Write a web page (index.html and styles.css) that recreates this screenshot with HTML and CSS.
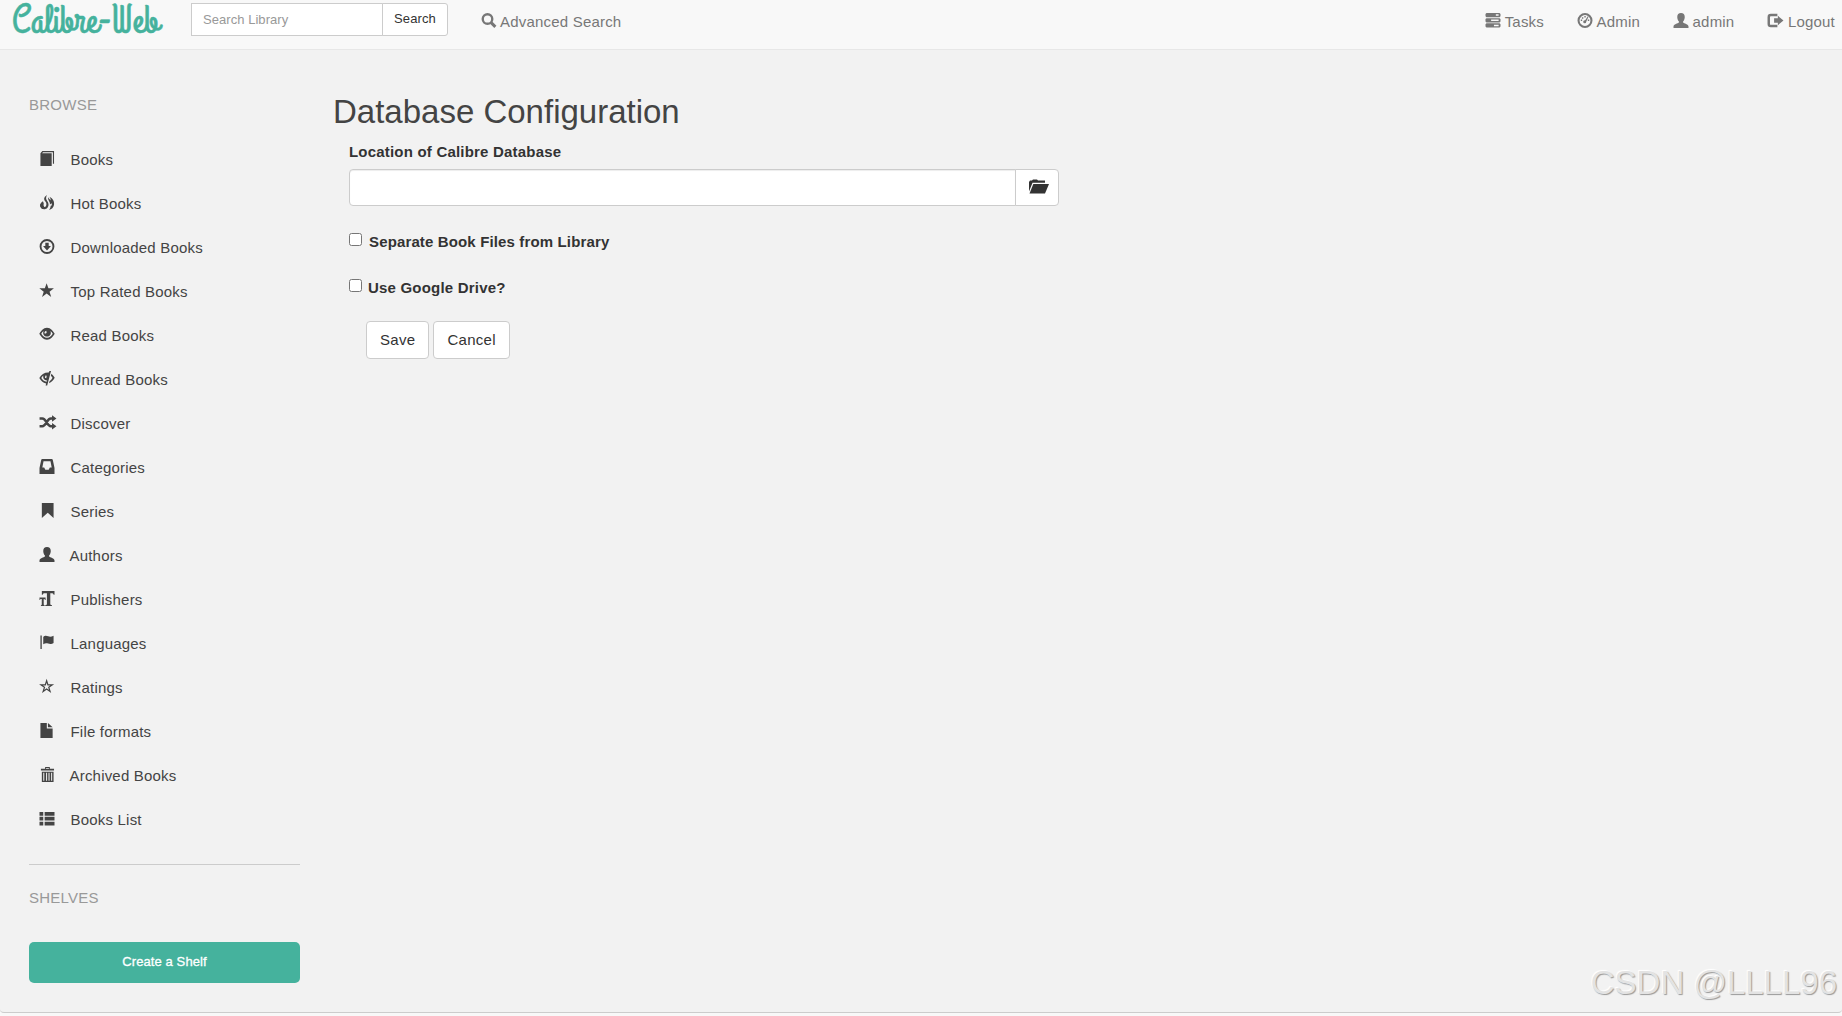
FILE: index.html
```
<!DOCTYPE html>
<html lang="en">
<head>
  <meta charset="UTF-8" />
  <meta name="viewport" content="width=device-width, initial-scale=1.0"/>
  <title>Calibre-Web | Database Configuration</title>
  <link rel="stylesheet" href="styles.css">
</head>
<body>
  <nav class="navbar">
    <a class="brand">
      <svg width="170" height="49" viewBox="0 0 170 49"><text x="0" y="32" textLength="147" lengthAdjust="spacingAndGlyphs">Calibre-Web</text></svg>
    </a>
    <form class="search">
      <input type="text" placeholder="Search Library">
      <button type="button">Search</button>
    </form>
    <a class="nav-link advanced">
      <svg class="icon" viewBox="0 0 16 16"><circle cx="6.4" cy="6.4" r="5.1" fill="none" stroke="currentColor" stroke-width="2.5"/><path d="M10 10l4.800 4.800" stroke="currentColor" stroke-width="3.200"/></svg>
      <span>Advanced Search</span>
    </a>
    <div class="nav-right">
      <a class="nav-link">
        <svg class="icon" viewBox="0 0 16 16"><path fill-rule="evenodd" d="M1 0h14l1 1v2.500l-1 1H1l-1-1V1zM11 1.300v1.700h3V1.300zM1 5.500h14l1 1v2.500l-1 1H1l-1-1v-2.500zM6 7v1.500h8V7zM1 11h14l1 1v2.500l-1 1H1l-1-1v-2.500zM9 12.500v1.500h5v-1.500z"/></svg>
        <span>Tasks</span>
      </a>
      <a class="nav-link">
        <svg class="icon" viewBox="0 0 16 16"><circle cx="8" cy="8" r="6.900" fill="none" stroke="currentColor" stroke-width="2.200"/><path d="M7 9.500l4-6 .8.5-3 6.200zM3.500 7h1.500v1.500H3.500zM4.700 4.500h1.500V6H4.700zM7.300 3.200h1.500v1.500H7.300zM11 7h1.500v1.500H11z"/><circle cx="7.700" cy="9.300" r="1.600"/></svg>
        <span>Admin</span>
      </a>
      <a class="nav-link">
        <svg class="icon" viewBox="0 0 16 16"><path d="M8 0c2.600 0 4 1.700 4 4.200 0 2-.7 3.700-1.800 4.800v1.200c1 1 5.800 1.600 5.800 4.300V16H0v-1.500c0-2.700 4.800-3.300 5.800-4.300V9C4.700 7.900 4 6.200 4 4.200 4 1.700 5.400 0 8 0z"/></svg>
        <span>admin</span>
      </a>
      <a class="nav-link">
        <svg class="icon wide" viewBox="0 0 17 16"><path d="M10.500 2.200H3.500Q1.300 2.200 1.300 4.400v7.200q0 2.200 2.200 2.200h7" fill="none" stroke="currentColor" stroke-width="2.600"/><path d="M11 3l6 5-6 5v-2.700H7V5.700h4z"/></svg>
        <span>Logout</span>
      </a>
    </div>
  </nav>

  <div class="page">
    <aside class="sidebar">
      <p class="nav-head">BROWSE</p>
      <ul class="menu">
        <li><svg class="icon" viewBox="0 0 16 16"><path d="M1 2.500L3 0h12.500v13.500h-1.200V1.300H3.700l-.9 1.200H13V16H1z"/></svg><span>Books</span></li>
        <li><svg class="icon" viewBox="0 0 16 16"><path d="M8 0C4 2.500 4.500 5 6.500 7.300c1 1.500 1.200 3 .3 4.700-.8 1.400-2.800 1-2.700-.6C4.200 10 5 9 3.800 7.500.8 8.500 0 11 1.500 13.300c1.500 2.300 5.300 2.300 7 .2 1.900-2.300 1.300-5-.3-7.200C6.800 4.300 6.500 2.500 8 0z"/><path d="M3.800 6.500C.5 9-.2 12 2 14c1 1 3 1.400 4.500.8L4 11z"/><path d="M10.500 1.800c4 1.700 5.500 5.200 5 8.700-.4 2.800-2.500 5-5.500 5.500 1.500-1.500 1.900-3 1.900-4.500 1.200 0 1.600-1.500 1-2.800l-1.800 1.500c.5-3-2.600-4.500-1.800-7.700C10.300 4.500 11.500 5 12 5.800c0-1.600-.5-2.800-1.500-4z"/></svg><span>Hot Books</span></li>
        <li><svg class="icon" viewBox="0 0 16 16"><circle cx="8" cy="8" r="6.900" fill="none" stroke="currentColor" stroke-width="2"/><path d="M6.200 4h3.600v3.500h2.400L8 12.300 3.800 7.500h2.400z"/></svg><span>Downloaded Books</span></li>
        <li><svg class="icon" viewBox="0 0 16 16"><path d="M7.600.3l1.900 5.400h5.900l-4.700 3.500 1.800 5.600-4.900-3.500-4.900 3.500 1.800-5.600L-.2 5.700h5.900z"/></svg><span>Top Rated Books</span></li>
        <li><svg class="icon" viewBox="0 0 16 16"><path fill-rule="evenodd" d="M8 .8c4 0 6.500 3.600 8.200 6.400-1.700 3-4.200 6.300-8.200 6.300S1.500 10.200-.2 7.200C1.500 4.400 4 .8 8 .8zM4.300 4.300C3.200 5.100 2.500 6 1.900 7.200c1.300 2.400 3.400 4.300 6.100 4.300s4.800-1.900 6.100-4.300c-.6-1.200-1.300-2.100-2.400-2.900C13 8 10.800 10.200 8 10.200S3 8 4.300 4.300zM7.300 4c-1.800.2-2.500 2-1.600 3.200l1.900-.7z"/></svg><span>Read Books</span></li>
        <li><svg class="icon" viewBox="0 0 16 16"><path fill-rule="evenodd" d="M10.600 0h1.700L8.200 15.500H6.500l.6-2.200C3.700 12.700 1.300 10.200-.2 7.500 2 3.600 5.200 1.400 9.900 1.600zM4.100 4.700C3.100 5.400 2.400 6.300 1.900 7.500c1.200 2 3 3.500 5.700 3.900l.4-1.400C5 9.800 3.400 7.500 4.100 4.700zM6.300 4.800L5.800 7.200l1.400.5.5-2.600zM12.700 2.900c1.600 1.200 2.600 2.700 3.500 4.400-1.400 2.700-3.400 4.900-6.100 5.800l.6-2.300c1.400-.8 2.400-2 3.200-3.500-.5-1-1-1.700-1.800-2.300z"/></svg><span>Unread Books</span></li>
        <li><svg class="icon shuffle" viewBox="0 0 18 16"><path d="M0 3.800h3C7 3.800 8 12 12 12h2M0 12h3C7 12 8 3.800 12 3.800h2" fill="none" stroke="currentColor" stroke-width="2.700"/><path d="M13.300.3L18 3.800l-4.700 3.500zM13.300 8.500L18 12l-4.700 3.500z"/></svg><span>Discover</span></li>
        <li><svg class="icon" viewBox="0 0 16 16"><path fill-rule="evenodd" d="M3 0h10q1 0 1.200 1L16 9.500V16H0V9.500L1.800 1Q2 0 3 0zM4.300 2.500L3 9h2l1.200 2.500h3.600L11 9h2l-1.300-6.500z"/></svg><span>Categories</span></li>
        <li><svg class="icon" viewBox="0 0 16 16"><path d="M2.500 0H15v16l-6.200-5.500L2.500 16z"/></svg><span>Series</span></li>
        <li class="cap-a"><svg class="icon" viewBox="0 0 16 16"><path d="M8 0c2.600 0 4 1.700 4 4.200 0 2-.7 3.700-1.800 4.800v1.200c1 1 5.800 1.600 5.800 4.300V16H0v-1.500c0-2.700 4.800-3.300 5.800-4.300V9C4.700 7.900 4 6.200 4 4.200 4 1.700 5.400 0 8 0z"/></svg><span>Authors</span></li>
        <li><svg class="icon" viewBox="0 0 16 16"><path d="M2.500 0H16v4h-.9c-.3-1.200-.9-1.500-2.600-1.500h-1v11.300c0 .8.600 1.100 1.700 1.200v1H6.200v-1c1.200-.1 1.700-.4 1.700-1.200V2.500H6C4.300 2.500 3.700 2.800 3.400 4h-.9zM0 7h6.500v2.500H6c-.2-.7-.6-1-1.400-1h-.1v5.800c0 .5.400.7 1 .8v.9h-4v-.9c.6-.1.900-.3.900-.8V8.500H2c-.9 0-1.300.3-1.500 1H0z"/></svg><span>Publishers</span></li>
        <li><svg class="icon" viewBox="0 0 16 16"><path d="M1 .5h1.400V15H1zM4 2c2-1.700 3.500-1.300 5.200-.6 2 .8 3.500.6 5.800-.7v7.700c-2.200 1.500-3.800 1.300-5.800.7-1.800-.6-3.200-.6-5.200.7z"/></svg><span>Languages</span></li>
        <li><svg class="icon" viewBox="0 0 16 16"><path d="M7.600 1.900l1.400 4.400h4.600L9.900 8.900l1.400 4.400-3.700-2.600-3.700 2.600 1.400-4.400-3.700-2.600h4.600z" fill="none" stroke="currentColor" stroke-width="1.300"/></svg><span>Ratings</span></li>
        <li><svg class="icon" viewBox="0 0 16 16"><path d="M1 0h6.800v5.800H14V16H1zM9 0l5 4.600H9z"/></svg><span>File formats</span></li>
        <li class="cap-a"><svg class="icon" viewBox="0 0 16 16"><path fill-rule="evenodd" d="M6 0h5v1.800h4.500v2h-14v-2H6zM7 1v.8h3V1zM2.500 5H15v11H2.500zM4 6v8.700h1.100V6zM7 6v8.700h1.100V6zM9.600 6v8.700h1.100V6zM12.400 6v8.700h1.100V6z"/></svg><span>Archived Books</span></li>
        <li><svg class="icon" viewBox="0 0 16 16"><path d="M0 1h4v4H0zM5.500 1H16v4H5.500zM0 6.200h4v4H0zM5.500 6.200H16v4H5.500zM0 11.500h4v4H0zM5.500 11.500H16v4H5.500z"/></svg><span>Books List</span></li>
      </ul>
      <p class="nav-head shelves">SHELVES</p>
      <a class="create-shelf">Create a Shelf</a>
    </aside>

    <main class="content">
      <h2>Database Configuration</h2>
      <form class="config">
        <label class="field-label" for="config_calibre_dir">Location of Calibre Database</label>
        <div class="input-group">
          <input type="text" id="config_calibre_dir">
          <button type="button" aria-label="Browse">
            <svg class="folder" viewBox="0 0 20 16"><path d="M0 12.500V3l1-1.500h2L4 .5h4l1 1h7v2.300H3.500z"/><path d="M4.300 5H20l-4 9.500H.5z"/></svg>
          </button>
        </div>
        <div class="check separate">
          <input type="checkbox" id="config_calibre_split">
          <label for="config_calibre_split">Separate Book Files from Library</label>
        </div>
        <div class="check drive">
          <input type="checkbox" id="config_use_google_drive">
          <label for="config_use_google_drive">Use Google Drive?</label>
        </div>
        <div class="buttons">
          <button type="button">Save</button>
          <button type="button">Cancel</button>
        </div>
      </form>
    </main>
  </div>
  <div class="page-end"></div>
  <div class="watermark">CSDN @LLLL96</div>
</body>
</html>
```

FILE: styles.css
```
* {
  box-sizing: border-box;
}
body {
  margin: 0;
  height: 1016px;
  overflow: hidden;
  display: flex;
  flex-direction: column;
  font-family: "Liberation Sans", Arial, sans-serif;
  font-size: 15px;
  color: #444;
  background: #f8f8f8;
}
input, button {
  font-family: inherit;
  margin: 0;
}
.icon {
  width: 16px;
  height: 15px;
  flex: none;
  fill: currentColor;
  overflow: visible;
}
.navbar {
  display: flex;
  align-items: flex-start;
  height: 50px;
  flex: none;
  padding-left: 12px;
  background: #f8f8f8;
  border-bottom: 1px solid #e7e7e7;
}
.brand {
  width: 179px;
  height: 49px;
}
.brand svg {
  overflow: visible;
}
.brand text {
  font-family: "Grand Hotel", cursive;
  font-size: 40px;
  fill: #45b29d;
  stroke: #45b29d;
  stroke-width: 0.5px;
}
.search {
  display: flex;
  margin-top: 3px;
}
.search input {
  width: 192px;
  height: 33px;
  padding: 0 11px 1px;
  border: 1px solid #ccc;
  border-radius: 0;
  font-size: 13px;
  letter-spacing: 0.05px;
}
.search input::placeholder {
  color: #999;
}
.search button {
  width: 66px;
  height: 33px;
  margin-left: -1px;
  padding: 0 0 3px;
  border: 1px solid #ccc;
  border-radius: 0 3px 3px 0;
  background: #fff;
  color: #333;
  font-size: 13px;
  letter-spacing: 0.1px;
}
.nav-link {
  display: flex;
  gap: 4px;
  padding-top: 13px;
  line-height: 17px;
  letter-spacing: 0.2px;
  color: #777;
}
.nav-link .wide {
  width: 17px;
}
.advanced {
  gap: 3px;
  margin-left: 33px;
}
.nav-right {
  display: flex;
  gap: 32.5px;
  margin-left: auto;
  padding-right: 7px;
}
.page {
  display: flex;
  flex: 1;
  background: #f2f2f2;
  border-bottom: 1px solid #ccc;
  border-radius: 0 0 4px 4px;
}
.page-end {
  height: 3px;
  flex: none;
}
.sidebar {
  width: 300px;
  padding: 46px 0 0 29px;
}
.nav-head {
  margin: 0;
  line-height: 17px;
  letter-spacing: 0.25px;
  color: #999;
}
.menu {
  list-style: none;
  margin: 25px 0 22px;
  padding: 0;
}
.menu li {
  display: flex;
  align-items: center;
  gap: 15.5px;
  height: 44px;
  padding-left: 10px;
  letter-spacing: 0.2px;
}
.menu .icon {
  margin-top: -3px;
}
.menu span {
  margin-top: -2px;
}
.menu .cap-a {
  gap: 14.5px;
}
.menu .shuffle {
  width: 18px;
  margin-right: -2px;
}
.shelves {
  padding-top: 24px;
  border-top: 1px solid #ccc;
}
.create-shelf {
  display: block;
  height: 41px;
  margin-top: 36px;
  border-radius: 5px;
  background: #45b29d;
  color: #fff;
  font-size: 13px;
  line-height: 39px;
  text-align: center;
  letter-spacing: 0.1px;
  -webkit-text-stroke: 0.3px #fff;
}
.content {
  padding: 43px 0 0 33px;
}
h2 {
  margin: 0;
  font-size: 33px;
  font-weight: normal;
  line-height: 38px;
}
.config {
  padding: 12px 0 0 16px;
  color: #333;
}
.field-label {
  display: block;
  line-height: 17px;
}
.config label {
  font-weight: bold;
  letter-spacing: 0.2px;
}
.input-group {
  display: flex;
  margin-top: 9px;
}
.input-group input {
  width: 667px;
  height: 37px;
  border: 1px solid #ccc;
  border-radius: 4px 0 0 4px;
  box-shadow: inset 0 1px 1px rgba(0,0,0,0.075);
}
.input-group button {
  width: 44px;
  height: 37px;
  margin-left: -1px;
  padding: 0 0 2px 3px;
  border: 1px solid #ccc;
  border-radius: 0 4px 4px 0;
  background: #fff;
}
.folder {
  display: block;
  width: 20px;
  height: 16px;
  margin: 0 auto;
  fill: #333;
}
.check {
  display: flex;
  align-items: flex-start;
  gap: 6px;
  line-height: 17px;
}
.separate {
  gap: 7px;
  margin-top: 27px;
}
.config .separate label {
  letter-spacing: 0.14px;
}
.drive {
  margin-top: 29px;
}
.buttons {
  display: flex;
  gap: 4px;
  margin: 25px 0 0 17px;
}
.buttons button {
  height: 38px;
  padding: 0 13px 1px;
  border: 1px solid #ccc;
  border-radius: 4px;
  background: #fff;
  color: #333;
  font-size: 15px;
  letter-spacing: 0.3px;
}
.watermark {
  position: absolute;
  right: 5px;
  bottom: 13px;
  font-size: 33px;
  line-height: 40px;
  color: #e3e3e3;
  text-shadow: 1px 1px 1px #999, -1px -1px 1px #fff;
}
```
